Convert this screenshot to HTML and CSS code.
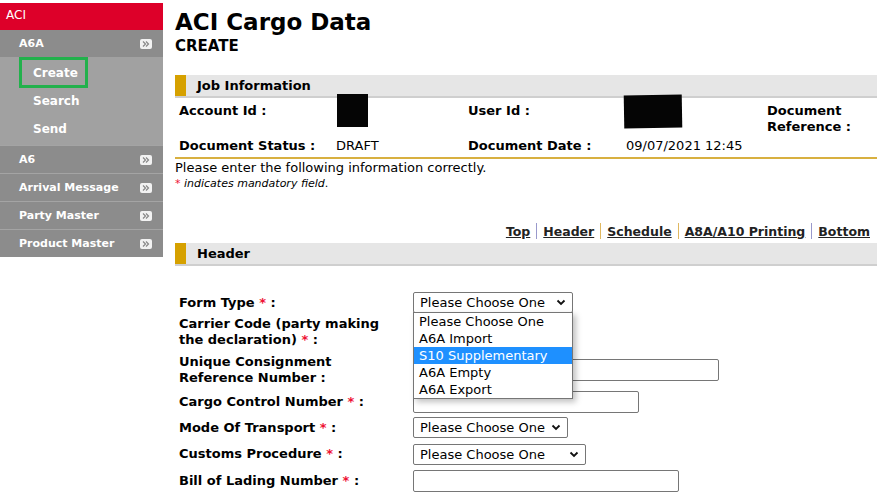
FILE: index.html
```html
<!DOCTYPE html>
<html>
<head>
<meta charset="utf-8">
<link rel="stylesheet" href="styles.css">
</head>
<body>
<div class="page">
  <nav class="sidebar">
    <div class="side-title">ACI</div>
    <div class="side-row"><span>A6A</span><span class="arr"><svg width="8" height="6" viewBox="0 0 8 6"><path d="M1 0.5 L3.5 3 L1 5.5 M4 0.5 L6.5 3 L4 5.5" fill="none" stroke="#888" stroke-width="1.2"/></svg></span></div>
    <div class="side-sub">
      <div class="sub-item active"><span>Create</span></div>
      <div class="sub-item"><span>Search</span></div>
      <div class="sub-item"><span>Send</span></div>
    </div>
    <div class="side-row sep"><span>A6</span><span class="arr"><svg width="8" height="6" viewBox="0 0 8 6"><path d="M1 0.5 L3.5 3 L1 5.5 M4 0.5 L6.5 3 L4 5.5" fill="none" stroke="#888" stroke-width="1.2"/></svg></span></div>
    <div class="side-row sep"><span>Arrival Message</span><span class="arr"><svg width="8" height="6" viewBox="0 0 8 6"><path d="M1 0.5 L3.5 3 L1 5.5 M4 0.5 L6.5 3 L4 5.5" fill="none" stroke="#888" stroke-width="1.2"/></svg></span></div>
    <div class="side-row sep"><span>Party Master</span><span class="arr"><svg width="8" height="6" viewBox="0 0 8 6"><path d="M1 0.5 L3.5 3 L1 5.5 M4 0.5 L6.5 3 L4 5.5" fill="none" stroke="#888" stroke-width="1.2"/></svg></span></div>
    <div class="side-row sep"><span>Product Master</span><span class="arr"><svg width="8" height="6" viewBox="0 0 8 6"><path d="M1 0.5 L3.5 3 L1 5.5 M4 0.5 L6.5 3 L4 5.5" fill="none" stroke="#888" stroke-width="1.2"/></svg></span></div>
  </nav>

  <main class="main">
    <h1 class="title">ACI Cargo Data</h1>
    <div class="subtitle">CREATE</div>

    <div class="section-bar"><span class="mark"></span><span>Job Information</span></div>
    <div class="job-grid">
      <div class="lbl">Account Id :</div>
      <div class="val"><span class="redact r1"></span></div>
      <div class="lbl">User Id :</div>
      <div class="val"><span class="redact r2"></span></div>
      <div class="lbl">Document<br>Reference :</div>
      <div class="lbl">Document Status :</div>
      <div class="val">DRAFT</div>
      <div class="lbl">Document Date :</div>
      <div class="val">09/07/2021 12:45</div>
      <div></div>
    </div>
    <p class="note">Please enter the following information correctly.</p>
    <p class="mand"><span class="req">*</span> <i>indicates mandatory field</i>.</p>

    <div class="links">
      <a href="#">Top</a><span class="bar b1"></span><a href="#">Header</a><span class="bar b2"></span><a href="#">Schedule</a><span class="bar b2"></span><a href="#">A8A/A10 Printing</a><span class="bar b1"></span><a href="#">Bottom</a>
    </div>

    <div class="section-bar"><span class="mark"></span><span>Header</span></div>

    <div class="form">
      <div class="flbl">Form Type <span class="req">*</span> :</div>
      <div class="fctl">
        <div class="sel w160">Please Choose One<svg class="chev" width="10" height="7" viewBox="0 0 10 7"><path d="M1.5 1.5 L5 5 L8.5 1.5" fill="none" stroke="#111" stroke-width="1.8"/></svg></div>
        <div class="dropdown">
          <div class="opt">Please Choose One</div>
          <div class="opt">A6A Import</div>
          <div class="opt hl">S10 Supplementary</div>
          <div class="opt">A6A Empty</div>
          <div class="opt">A6A Export</div>
        </div>
      </div>
      <div class="flbl">Carrier Code (party making<br>the declaration) <span class="req">*</span> :</div>
      <div class="fctl"></div>
      <div class="flbl">Unique Consignment<br>Reference Number :</div>
      <div class="fctl"><div class="inp w306"></div></div>
      <div class="flbl">Cargo Control Number <span class="req">*</span> :</div>
      <div class="fctl"><div class="inp w226"></div></div>
      <div class="flbl">Mode Of Transport <span class="req">*</span> :</div>
      <div class="fctl"><div class="sel w155">Please Choose One<svg class="chev" width="10" height="7" viewBox="0 0 10 7"><path d="M1.5 1.5 L5 5 L8.5 1.5" fill="none" stroke="#111" stroke-width="1.8"/></svg></div></div>
      <div class="flbl">Customs Procedure <span class="req">*</span> :</div>
      <div class="fctl"><div class="sel w173">Please Choose One<svg class="chev" width="10" height="7" viewBox="0 0 10 7"><path d="M1.5 1.5 L5 5 L8.5 1.5" fill="none" stroke="#111" stroke-width="1.8"/></svg></div></div>
      <div class="flbl">Bill of Lading Number <span class="req">*</span> :</div>
      <div class="fctl"><div class="inp w266"></div></div>
    </div>
  </main>
</div>
</body>
</html>
```

FILE: styles.css
```css
* { box-sizing: border-box; }
html, body { margin: 0; padding: 0; background: #fff; }
body {
  font-family: "DejaVu Sans", Verdana, sans-serif;
  font-size: 13px;
  color: #000;
}
.page {
  display: flex;
  align-items: flex-start;
  padding-top: 3px;
}
.sidebar {
  width: 163px;
  flex: none;
  color: #fff;
  font-size: 11px;
  font-weight: bold;
}
.side-title {
  background: #dd0029;
  height: 27px;
  padding: 5px 0 0 6px;
  font-weight: normal;
  font-size: 12px;
}
.side-row {
  background: #8c8c8c;
  height: 27px;
  display: flex;
  align-items: center;
  justify-content: space-between;
  padding: 0 11px 0 19px;
}
.side-row.sep { border-top: 1px solid #a4a4a4; height: 28px; }
.arr {
  width: 12px;
  height: 10px;
  background: #f2f2f2;
  border-radius: 2px;
  display: flex;
  align-items: center;
  justify-content: center;
}
.side-sub {
  background: #a1a1a1;
  padding: 0 0 2px 19px;
  font-size: 12px;
  font-weight: 600;
}
.sub-item {
  height: 28px;
  display: flex;
  align-items: center;
  padding-left: 14px;
}
.sub-item.active {
  width: 69px;
  height: 31px;
  border: 3px solid #22b14c;
  padding-left: 11px;
  margin-bottom: -1px;
}
.main {
  flex: 1;
  padding-left: 12px;
  padding-right: 0;
}
.title {
  margin: 4px 0 0 0;
  font-size: 23px;
  line-height: 30px;
  font-weight: bold;
}
.subtitle {
  font-size: 15px;
  font-weight: bold;
  line-height: 18px;
  margin-bottom: 20px;
}
.section-bar {
  background: #e6e6e6;
  height: 23px;
  display: flex;
  align-items: center;
  font-weight: bold;
  border-bottom: 2px solid #cfcfcf;
}
.section-bar .mark {
  width: 11px;
  height: 21px;
  background: #d6a100;
  margin-right: 11px;
  align-self: flex-start;
}
.job-grid {
  display: grid;
  grid-template-columns: 157px 132px 158px 141px auto;
  grid-template-rows: 35px 24px;
  border-bottom: 2px solid #d8b040;
  padding-left: 4px;
  font-size: 13px;
}
.job-grid .lbl { font-weight: bold; padding-top: 5px; line-height: 16px; }
.job-grid .val { padding-top: 5px; line-height: 16px; position: relative; }
.redact {
  display: block;
  position: absolute;
  background: #050505;
}
.redact.r1 { left: 1px; top: -4px; width: 31px; height: 33px; }
.redact.r2 { left: -2px; top: -3px; width: 58px; height: 33px; transform: rotate(-1deg); }
.note { margin: 1px 0 0 0; line-height: 16px; }
.mand { margin: 0; font-size: 11px; line-height: 16px; }
.req { color: #ee1133; }
.links {
  display: flex;
  justify-content: flex-end;
  align-items: center;
  margin-top: 29px;
  padding-right: 7px;
  height: 20px;
  margin-bottom: 2px;
  font-size: 12.5px;
}
.links a {
  color: #222;
  font-weight: bold;
  text-decoration: underline;
}
.links .bar {
  display: inline-block;
  width: 1px;
  height: 16px;
  margin: 0 6px;
}
.bar.b1 { background: #9999cc; }
.bar.b2 { background: #e0b860; }
.form {
  display: grid;
  grid-template-columns: 234px auto;
  grid-template-rows: 23px 36px 39px 25px 27px 26px 27px;
  align-items: center;
  padding-left: 4px;
  margin-top: 25px;
  font-weight: bold;
}
.flbl { line-height: 16px; }
.fctl { position: relative; }
.sel {
  height: 21px;
  border: 1px solid #767676;
  border-radius: 2px;
  font-weight: normal;
  display: flex;
  align-items: center;
  justify-content: space-between;
  padding: 0 6px 0 6px;
  background: #fff;
}
.w160 { width: 160px; }
.w155 { width: 155px; }
.w173 { width: 173px; }
.inp {
  height: 22px;
  border: 1px solid #767676;
  border-radius: 2px;
  background: #fff;
}
.w306 { width: 306px; }
.w226 { width: 226px; }
.w266 { width: 266px; }
.dropdown {
  position: absolute;
  left: 0;
  top: 20px;
  width: 160px;
  border: 1px solid #767676;
  background: #fff;
  font-weight: normal;
  box-shadow: 3px 3px 6px rgba(0,0,0,0.25);
  z-index: 5;
  padding: 0;
}
.opt { height: 17px; line-height: 17px; padding-left: 5px; }
.opt.hl { background: #1e90ff; color: #fff; }
```
